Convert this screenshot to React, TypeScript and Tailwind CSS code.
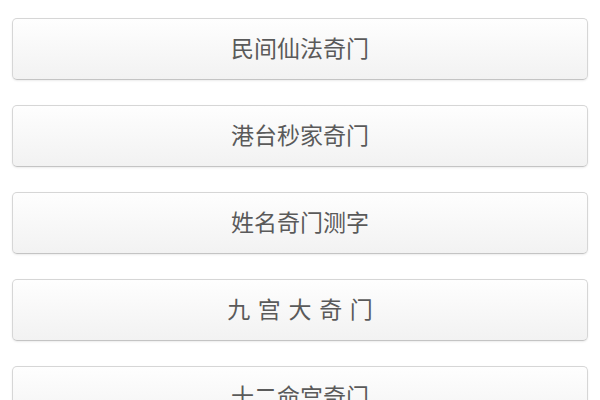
const items = [
  '民间仙法奇门',
  '港台秒家奇门',
  '姓名奇门测字',
  '九\u2004宫\u2004大\u2004奇\u2004门',
  '十二命宫奇门',
];

export default function App() {
  return (
    <div
      className="w-[600px] h-[400px] overflow-hidden bg-white px-3 pt-[18px] flex flex-col gap-[25px]"
      style={{ fontFamily: '"Noto Sans CJK SC", "Noto Sans", sans-serif' }}
    >
      {items.map((label) => (
        <button
          key={label}
          className="shrink-0 h-[62px] w-full rounded-[5px] border border-[#d6d6d6] border-b-[#c4c4c4] bg-gradient-to-b from-[#fefefe] to-[#f2f2f2] shadow-[0_1px_2px_rgba(0,0,0,0.08)] pb-[3px] text-[23px] leading-none text-[#5a5a5a] whitespace-pre"
        >
          {label}
        </button>
      ))}
    </div>
  );
}
